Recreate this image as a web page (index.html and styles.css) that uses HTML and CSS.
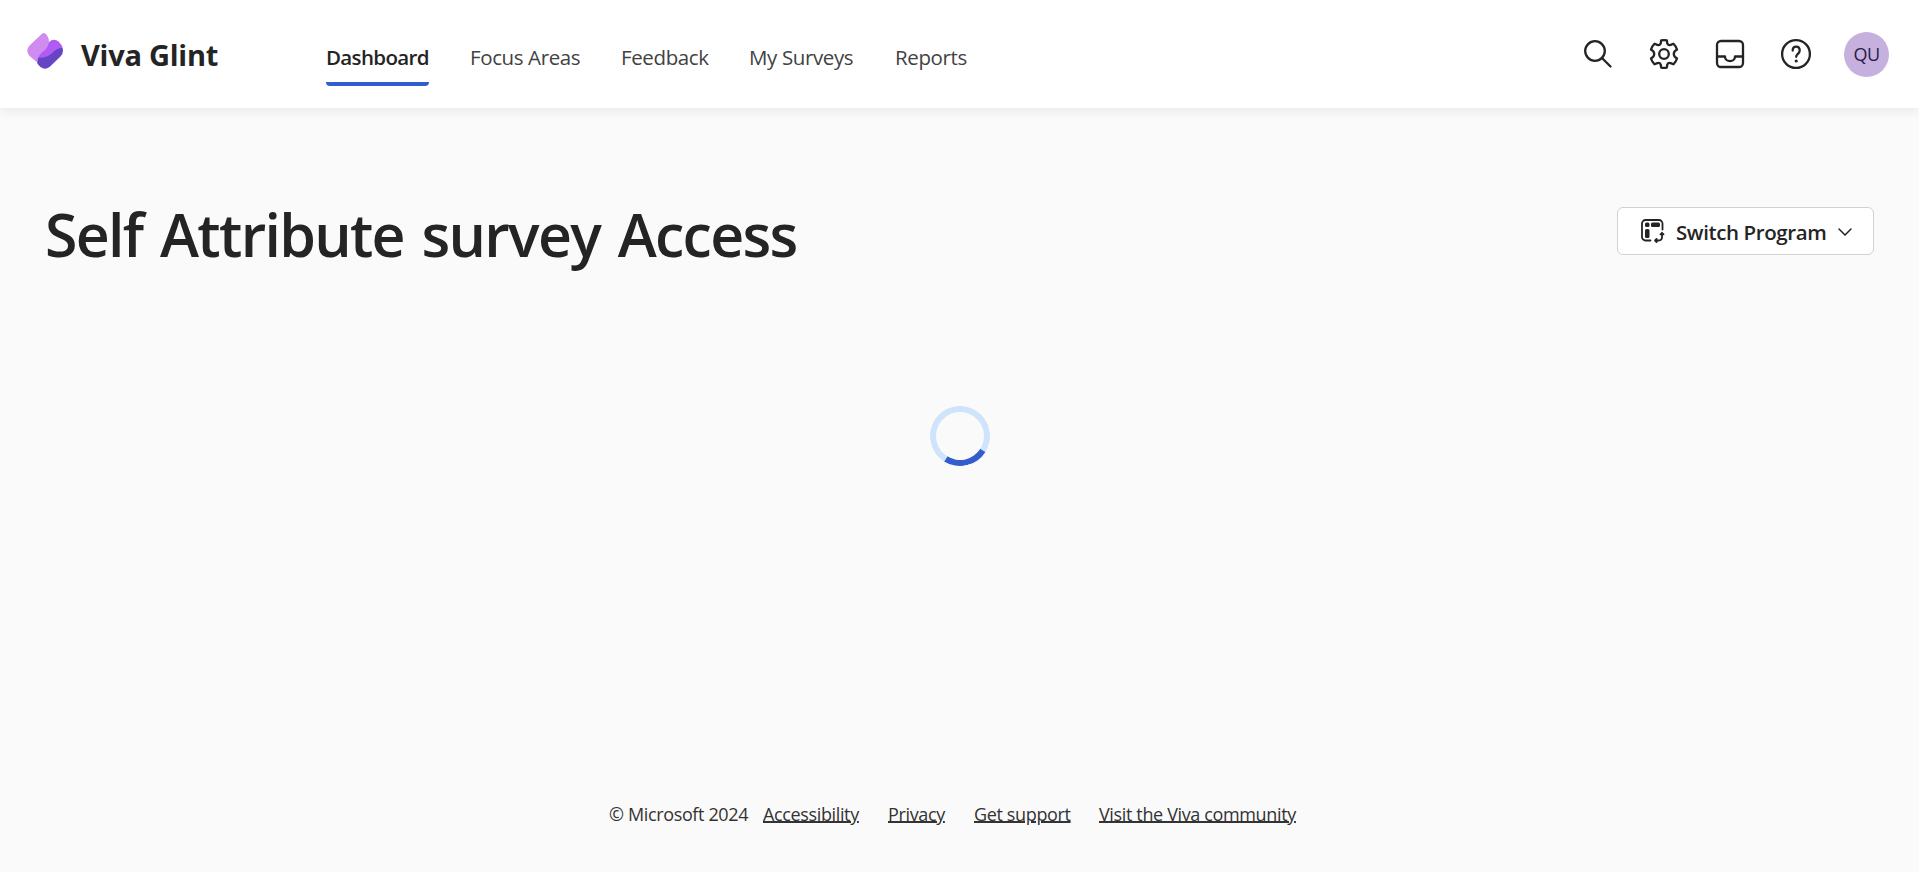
FILE: index.html
```html
<!DOCTYPE html>
<html lang="en">
<head>
<meta charset="utf-8">
<title>Viva Glint</title>
<link rel="stylesheet" href="styles.css">
</head>
<body>
<header class="topbar">
  <a class="brand">
    <svg class="brand-logo" width="36" height="36" viewBox="0 0 36 36">
      <path d="M10 25 L20 11 Q26 4 31.500 8.500 L34.500 12 Q36.500 15 35 18 L24 29 Z" fill="#b05cf4"/>
      <path d="M10 29 Q9.500 24.500 12 24.600 C21 25 24 21 28 17.500 Q32 14 35.500 15.300 Q37 20 33.500 23.500 L22.500 34 Q18 37.500 13.500 34 Q10 31 10 29 Z" fill="#6645c4"/>
      <path d="M2.500 12.500 L15 .8 Q17 -.8 18.800 1 C23.500 6 22.500 12 18.500 16.500 C14.500 20.500 11 21 10.500 29.500 L2.500 23 Q-2 17.500 2.500 12.500 Z" fill="#cf8bef"/>
    </svg>
    <span class="brand-name">Viva Glint</span>
  </a>
  <nav class="nav">
    <a class="nav-item active">Dashboard</a>
    <a class="nav-item focus">Focus Areas</a>
    <a class="nav-item feedback">Feedback</a>
    <a class="nav-item surveys">My Surveys</a>
    <a class="nav-item reports">Reports</a>
  </nav>
  <div class="tools">
    <svg class="tool" viewBox="0 0 32 32"><circle cx="13" cy="13" r="9.800"/><path d="M20 20l8.500 8.500"/></svg>
    <svg class="tool" viewBox="0 0 32 32"><circle cx="16" cy="16" r="4.800"/><path d="M12.700 5.500 L13.200 2.400 Q16 1.700 18.800 2.400 L19.300 5.500 Q20.300 7.600 22.600 6.900 L25.500 5.700 Q28 8.200 29 11.500 L26.600 13.400 Q25 16 26.600 18.600 L29 20.500 Q28 23.800 25.500 26.300 L22.600 25.100 Q20.300 24.400 19.300 26.500 L18.800 29.600 Q16 30.300 13.200 29.600 L12.700 26.500 Q11.700 24.400 9.400 25.100 L6.500 26.300 Q4 23.800 3 20.500 L5.400 18.600 Q7 16 5.400 13.400 L3 11.500 Q4 8.200 6.500 5.700 L9.400 6.900 Q11.700 7.600 12.700 5.500 Z"/></svg>
    <svg class="tool" viewBox="0 0 32 32"><rect x="3" y="3" width="26" height="26" rx="4"/><path d="M3 18.500h8c0 6.200 10 6.200 10 0h8"/></svg>
    <svg class="tool" viewBox="0 0 32 32"><circle cx="16" cy="16" r="13.900"/><path d="M12.700 12.500c0-5.200 7-5.200 7 0c0 3.300-3.500 3.300-3.500 6.300"/><circle class="dot" cx="16.200" cy="23" r="1.600"/></svg>
    <span class="avatar">QU</span>
  </div>
</header>
<main class="page">
  <div class="page-head">
    <h1 class="title">Self Attribute survey Access</h1>
    <button class="switch">
      <svg class="switch-icon" width="24" height="24" viewBox="0 0 24 24">
        <path class="line" d="M9.500 21.500H4.500a3.500 3.500 0 0 1-3.500-3.500V4.500A3.500 3.500 0 0 1 4.500 1h13.500a3.500 3.500 0 0 1 3.500 3.500V10.500"/>
        <rect x="4" y="3.500" width="4.500" height="4.500" rx="1.500"/><rect x="10" y="3.500" width="9" height="4.500" rx="1.500"/><rect x="4" y="10" width="4.500" height="9" rx="1.500"/>
        <path class="line" d="M14.500 21.500h3q3.500 0 3.500-3.500V14.500M19.500 15.300L21 13.800l1.500 1.500M15.600 20L14.100 21.500l1.500 1.500"/>
      </svg>
      <span class="switch-label">Switch Program</span>
      <svg class="chevron" width="14" height="8" viewBox="0 0 14 8"><path d="M1 1l6 6 6-6"/></svg>
    </button>
  </div>
  <div class="loading"><div class="spinner"></div></div>
</main>
<footer class="footer">
  <span class="copy">© Microsoft 2024</span>
  <a class="link accessibility">Accessibility</a>
  <a class="link privacy">Privacy</a>
  <a class="link support">Get support</a>
  <a class="link community">Visit the Viva community</a>
</footer>
</body>
</html>
```
FILE: styles.css
```css
* { box-sizing: border-box; }
body {
  margin: 0;
  height: 872px;
  display: flex;
  flex-direction: column;
  background: #fafafa;
  color: #242424;
  font-family: "Open Sans", "Noto Sans", sans-serif;
  white-space: nowrap;
  overflow: hidden;
}
.topbar {
  height: 108px;
  flex: none;
  display: flex;
  background: #fff;
  box-shadow: 0 3px 9px rgba(0, 20, 40, .07);
}
.brand { width: 326px; padding: 33px 0 0 27px; display: flex; }
.brand-name { margin: -1px 0 0 18px; font-size: 29px; line-height: 46px; height: 46px; font-weight: 700; letter-spacing: -.25px; }
.nav { display: flex; gap: 41px; height: 86px; padding-top: 40px; font-size: 20.500px; line-height: 34px; letter-spacing: -.38px; color: #424242; }
.nav-item { height: 46px; }
.active { width: 103px; color: #242424; font-weight: 550; letter-spacing: -.65px; border-bottom: 4px solid #335ccc; border-radius: 0 0 4px 4px; }
.focus { width: 110px; }
.feedback { width: 87px; }
.surveys { width: 105px; }
.tools { margin: 0 30px 0 auto; display: flex; gap: 34px; padding-top: 32px; }
.tool { width: 32px; height: 32px; margin-top: 6px; fill: none; stroke: #242424; stroke-width: 2.300; stroke-linecap: round; stroke-linejoin: round; }
.dot { fill: #242424; stroke: none; }
.avatar { width: 45px; height: 45px; margin-left: -2px; border-radius: 50%; background: #c6b1de; color: #2b1a4c; font-size: 18px; line-height: 45px; letter-spacing: -.5px; text-align: center; }
.page { flex: 1; padding: 87px 45px 0; }
.page-head { display: flex; justify-content: space-between; align-items: flex-start; }
.title { margin: 0; font-size: 59px; line-height: 79px; height: 82px; font-weight: 580; letter-spacing: -1.700px; word-spacing: 4px; }
.switch { width: 257px; height: 48px; margin-top: 12px; padding: 0 0 0 23px; display: flex; align-items: center; background: #fff; border: 1px solid #d1d1d1; border-radius: 6px; font-family: inherit; font-size: 20.500px; color: #242424; }
.switch-icon { fill: #242424; }
.line { fill: none; stroke: #242424; stroke-width: 1.800; stroke-linecap: round; stroke-linejoin: round; }
.switch-label { width: 151px; margin-left: 11px; padding-top: 2px; font-weight: 550; letter-spacing: -.4px; text-align: left; }
.chevron { margin: 2px 0 0 11px; fill: none; stroke: #242424; stroke-width: 1.500; stroke-linecap: round; }
.loading { display: flex; justify-content: center; padding-top: 129px; }
.spinner { width: 60px; height: 60px; border: 6px solid #cfe4fa; border-bottom-color: #335ccc; border-radius: 50%; transform: rotate(-13deg); }
.footer { height: 73px; margin-left: 609px; display: flex; font-size: 18px; line-height: 30px; letter-spacing: -.36px; color: #333; }
.copy { width: 154px; }
.link { text-decoration: underline; text-decoration-thickness: 2px; text-underline-offset: 0; }
.accessibility { width: 125px; }
.privacy { width: 86px; }
.support { width: 125px; }
```
